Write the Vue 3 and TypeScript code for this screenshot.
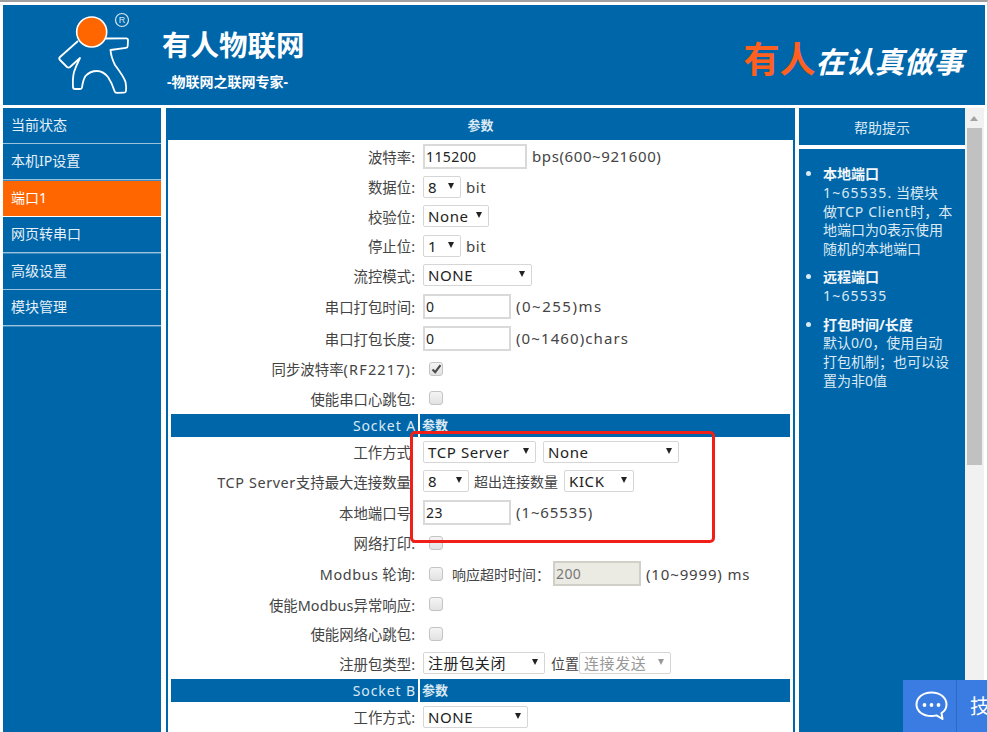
<script setup lang="ts">
const nav = ['当前状态', '本机IP设置', '端口1', '网页转串口', '高级设置', '模块管理']
const active = '端口1'
</script>

<template>
  <div class="page">
    <header class="banner">
      <div class="brand">
        <svg class="logo" width="90" height="92" viewBox="55 5 90 92">
          <path d="M105 38.5 L126 38.3 Q128 38.3 128 40 L127.7 46 Q127.6 47.7 126 47.9 L110.5 50 Q111 57 115 65 Q124 77 125.5 82 Q126.5 87 126 91 Q125.8 92.7 124 92.7 L117 92.9 Q115 92.9 114.5 91 Q112 83 108 77 Q103 71 97 71 Q90 71 85.5 76 Q83 80 82 87.5 Q81.8 89 80 89 L75 89 Q73 89 73 87 Q72.5 78 74 72 Q76 66 80 58 L70 67 Q68.5 68.2 67 67 L60 60 Q58.5 58.5 60 57 L78 41" fill="none" stroke="#fff" stroke-width="1.8" stroke-linejoin="round" />
          <circle cx="91.7" cy="32" r="15" fill="#ff6600" stroke="#fff" stroke-width="1.6" />
          <circle cx="122" cy="20" r="6.5" fill="none" stroke="#d6e6f2" stroke-width="1.2" />
          <text x="122" y="23" class="reg">R</text>
        </svg>
        <div class="titles">
          <div class="title">有人物联网</div>
          <div class="subtitle">-物联网之联网专家-</div>
        </div>
      </div>
      <div class="slogan"><b>有人</b><i>在认真做事</i></div>
    </header>

    <div class="content">
      <nav class="side">
        <a v-for="n in nav" :key="n" class="nav-item" :class="{ on: n === active }">{{ n }}</a>
      </nav>

      <main class="panel">
        <div class="panel-head">参数</div>
        <div class="form">
          <div class="row tall"><label>波特率:</label><div class="ctl"><input class="in w104" value="115200" /><span class="unit">bps(600~921600)</span></div></div>
          <div class="row"><label>数据位:</label><div class="ctl"><span class="sel w38">8</span><span class="unit">bit</span></div></div>
          <div class="row"><label>校验位:</label><div class="ctl"><span class="sel w66">None</span></div></div>
          <div class="row"><label>停止位:</label><div class="ctl"><span class="sel w38">1</span><span class="unit">bit</span></div></div>
          <div class="row"><label>流控模式:</label><div class="ctl"><span class="sel w109">NONE</span></div></div>
          <div class="row tall"><label>串口打包时间:</label><div class="ctl"><input class="in w88" value="0" /><span class="unit u-ms">(0~255)ms</span></div></div>
          <div class="row tall"><label>串口打包长度:</label><div class="ctl"><input class="in w88" value="0" /><span class="unit u-chars">(0~1460)chars</span></div></div>
          <div class="row"><label>同步波特率<span class="lat">(RF2217)</span>:</label><div class="ctl"><span class="chk checked"><svg width="11" height="10" viewBox="0 0 11 10"><path d="M1.5 5.5 L4.2 8.2 L9.5 1.2" fill="none" stroke="#4a4a4a" stroke-width="2.2" /></svg></span></div></div>
          <div class="row"><label>使能串口心跳包:</label><div class="ctl"><span class="chk"></span></div></div>

          <div class="band"><span>Socket A</span><span>参数</span></div>
          <div class="row"><label class="nudge">工作方式</label><div class="ctl"><span class="sel w113">TCP Server</span><span class="sel w121">None</span></div></div>
          <div class="row"><label class="nudge"><span class="lat-s">TCP Server</span>支持最大连接数量</label><div class="ctl"><span class="sel w46">8</span><span class="plain">超出连接数量</span><span class="sel w70">KICK</span></div></div>
          <div class="row tall"><label class="nudge">本地端口号</label><div class="ctl"><input class="in w88" value="23" /><span class="unit u-port">(1~65535)</span></div></div>
          <div class="row"><label>网络打印:</label><div class="ctl"><span class="chk"></span></div></div>
          <div class="row tall"><label><span class="lat-s">Modbus</span> 轮询:</label><div class="ctl"><span class="chk"></span><span class="plain timeout">响应超时时间：</span><input class="in w88 off" value="200" disabled /><span class="unit u-range">(10~9999) ms</span></div></div>
          <div class="row"><label>使能<span class="lat-m">Modbus</span>异常响应:</label><div class="ctl"><span class="chk"></span></div></div>
          <div class="row"><label>使能网络心跳包:</label><div class="ctl"><span class="chk"></span></div></div>
          <div class="row"><label>注册包类型:</label><div class="ctl"><span class="sel w122">注册包关闭</span><span class="plain pos">位置</span><span class="sel w92 dim">连接发送</span></div></div>

          <div class="band"><span>Socket B</span><span>参数</span></div>
          <div class="row"><label>工作方式:</label><div class="ctl"><span class="sel w106">NONE</span></div></div>

          <div class="outline"></div>
        </div>
      </main>

      <aside class="help">
        <div class="help-head">帮助提示</div>
        <ul class="help-body">
          <li><strong>本地端口</strong><br /><span class="num">1~65535.</span> 当模块<br />做<span class="lat-h">TCP Client</span>时，本<br />地端口为0表示使用<br />随机的本地端口</li>
          <li><strong>远程端口</strong><br /><span class="num">1~65535</span></li>
          <li><strong>打包时间/长度</strong><br />默认0/0，使用自动<br />打包机制；也可以设<br />置为非0值</li>
        </ul>
      </aside>

      <div class="scroll"><span class="arrow"></span><span class="thumb"></span></div>
    </div>

    <div class="chat">
      <div class="chat-icon">
        <svg width="33" height="30" viewBox="0 0 33 30">
          <path d="M16.5 1.5 C7.5 1.5 1.5 7 1.5 13.5 C1.5 20 7.5 25 16.5 25 C18 25 20 24.8 21.5 24.4 L27.5 28 L26.5 22 C29.8 20 31.5 17 31.5 13.5 C31.5 7 25.5 1.5 16.5 1.5 Z" fill="none" stroke="#fff" stroke-width="2" stroke-linejoin="round" />
          <circle cx="9.5" cy="14" r="1.9" fill="#fff" />
          <circle cx="16.5" cy="14" r="1.9" fill="#fff" />
          <circle cx="23.5" cy="14" r="1.9" fill="#fff" />
        </svg>
      </div>
      <div class="chat-text">技</div>
    </div>
  </div>
</template>

<style>
html, body { margin: 0; height: 100%; overflow: hidden; background: #fff; }
</style>

<style scoped>
.page {
  position: relative;
  width: 988px;
  height: 732px;
  overflow: hidden;
  box-sizing: border-box;
  border-top: 2px solid #a0a0a0;
  border-right: 1px solid #cfcfcf;
  padding: 3px 3px 0;
  background: #fff;
  font-family: "Noto Sans", "Noto Sans CJK SC", sans-serif;
  font-size: 14px;
  color: #333;
}
.banner {
  height: 100px;
  width: 982px;
  background: #0066aa;
  display: flex;
  justify-content: space-between;
  box-sizing: border-box;
}
.brand { display: flex; padding-left: 52px; }
.logo { flex: none; }
.reg { font-size: 9px; fill: #d6e6f2; text-anchor: middle; font-family: "Liberation Sans", sans-serif; }
.titles { margin-left: 17px; color: #fff; font-weight: 700; }
.title { font-size: 28.5px; line-height: 40px; margin-top: 20px; }
.subtitle { font-size: 14px; line-height: 20px; margin-top: 7px; margin-left: 5px; }
.slogan { display: flex; align-items: baseline; margin: 30px 22px 0 0; line-height: 50px; height: 50px; }
.slogan b { color: #ff6020; font-size: 36px; }
.slogan i { color: #fff; font-size: 29.5px; font-weight: 700; font-style: italic; }

.content { display: flex; margin-top: 3px; height: 630px; }
.side {
  width: 158px;
  flex: none;
  background: #0066aa;
  display: flex;
  flex-direction: column;
  gap: 1.4px;
  margin-right: 5px;
}
.nav-item {
  height: 35px;
  line-height: 34px;
  padding-left: 8px;
  color: #e6f0f7;
  background: #0066aa;
  box-shadow: 0 1.4px 0 #9cc3dd;
}
.nav-item.on { background: #ff6600; color: #fff; box-shadow: 0 1.4px 0 #fff; }

.panel {
  width: 629px;
  flex: none;
  box-sizing: border-box;
  border: solid #0066aa;
  border-width: 0 2px 0 2px;
  margin-right: 4px;
}
.panel-head {
  height: 32px;
  line-height: 34px;
  background: #0066aa;
  color: #dbe9f3;
  text-align: center;
  font-size: 13px;
  font-weight: 700;
}
.form { position: relative; padding: 0 3px; }
.row { display: flex; align-items: center; height: 29.5px; }
.row.tall { height: 32px; }
.row label { width: 244px; flex: none; text-align: right; white-space: nowrap; color: #444; font-size: 14.4px; }
.row label.nudge { padding-right: 4px; box-sizing: border-box; }
.lat { letter-spacing: 1.2px; }
.lat-s { letter-spacing: .6px; }
.lat-m { letter-spacing: .1px; }
.ctl { display: flex; align-items: center; margin-left: 8px; white-space: nowrap; }
.in {
  box-sizing: border-box;
  height: 25px;
  border: 2px solid #d9d9d9;
  padding: 0 1px;
  font: inherit;
  color: #222;
  background: #fff;
  outline: none;
  margin: 0;
  letter-spacing: .4px;
}
.in.off { background: #ebebe4; color: #777; border-color: #d0d0c8; margin-left: 3px; }
.unit { margin-left: 5px; color: #444; font-size: 15px; letter-spacing: .6px; }
.u-ms { letter-spacing: 1.5px; }
.u-chars { letter-spacing: 1.1px; }
.u-range { letter-spacing: .85px; }
.u-port { letter-spacing: .9px; }
.plain { color: #444; margin: 0 6px 0 5px; }
.plain.timeout { margin: 0 0 0 9px; }
.plain.pos { margin: 0 0 0 6px; }
.sel {
  box-sizing: border-box;
  position: relative;
  display: inline-block;
  height: 22px;
  line-height: 20px;
  border: 1.5px solid #d6d6d6;
  border-radius: 2px;
  padding-left: 4px;
  color: #222;
  background: #fff;
  font-size: 15px;
  letter-spacing: .6px;
}
.sel::after {
  content: "";
  position: absolute;
  right: 6px;
  top: 6px;
  border: 3.5px solid transparent;
  border-top: 6px solid #222;
  border-bottom: 0;
}
.sel.dim { color: #999; }
.sel.dim::after { border-top-color: #999; }
.sel + .sel { margin-left: 7px; }
.plain + .sel { margin-left: 0; }
.w38 { width: 38px; }
.w46 { width: 46px; }
.w66 { width: 66px; }
.w70 { width: 70px; }
.w92 { width: 92px; }
.w104 { width: 104px; }
.w106 { width: 105px; }
.w109 { width: 109px; }
.w113 { width: 113px; }
.w121 { width: 136px; }
.w122 { width: 122px; }
.w88 { width: 88px; }
.chk {
  box-sizing: border-box;
  width: 14px;
  height: 14px;
  margin-left: 6px;
  border: 1px solid #c4c4c4;
  border-radius: 3px;
  background: linear-gradient(#f4f4f4, #e2e2e2);
  display: inline-flex;
  align-items: center;
  justify-content: center;
}
.band {
  display: flex;
  gap: 2px;
  height: 23px;
  line-height: 23px;
  margin-top: 1px;
  color: #dbe9f3;
  font-weight: 700;
  font-size: 13px;
}
.band span { background: #0066aa; }
.band span:first-child {
  width: 247px;
  box-sizing: border-box;
  padding-right: 2px;
  text-align: right;
  font-weight: 400;
  font-size: 14px;
  letter-spacing: .9px;
}
.band span:last-child { flex: 1; padding-left: 2px; }
.outline {
  position: absolute;
  left: 242px;
  top: 291px;
  width: 299px;
  height: 106px;
  border: 3px solid #f02018;
  border-radius: 5px;
  box-sizing: content-box;
  pointer-events: none;
}

.help { width: 166px; flex: none; display: flex; flex-direction: column; gap: 4px; }
.help-head {
  height: 37px;
  line-height: 40px;
  background: #0066aa;
  color: #dbe9f3;
  text-align: center;
  font-size: 14px;
}
.help-body {
  flex: 1;
  margin: 0;
  background: #0066aa;
  color: #dbe9f3;
  padding: 16px 8px 0 24px;
  line-height: 18.8px;
  list-style: disc;
}
.help-body li { margin-bottom: 9.5px; white-space: nowrap; }
.help-body strong { font-weight: 700; color: #f1f6fa; }
.num { letter-spacing: 1.2px; }
.lat-h { letter-spacing: .7px; }

.scroll {
  position: relative;
  width: 19px;
  flex: none;
  background: #f1f1f1;
}
.arrow {
  position: absolute;
  left: 5px;
  top: 8px;
  border: 4.5px solid transparent;
  border-bottom: 5px solid #a3a3a3;
  border-top: 0;
}
.thumb {
  position: absolute;
  left: 2px;
  right: 2px;
  top: 20px;
  height: 337px;
  background: #c1c1c1;
}

.chat {
  position: absolute;
  right: -1px;
  top: 678px;
  width: 85px;
  height: 52px;
  background: #3a7ce2;
  display: flex;
  color: #fff;
}
.chat-icon {
  width: 54px;
  flex: none;
  display: flex;
  align-items: center;
  justify-content: center;
  border-right: 1px solid #3069c4;
  box-sizing: border-box;
  padding-left: 3px;
}
.chat-text { padding-left: 13px; font-size: 20px; line-height: 54px; }
</style>
